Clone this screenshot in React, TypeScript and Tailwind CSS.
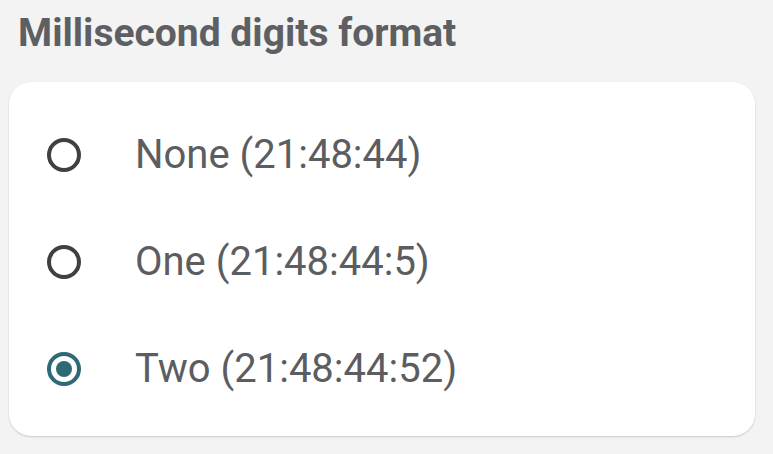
import React from "react";

const options = [
  { label: "None (21:48:44)" },
  { label: "One (21:48:44:5)" },
  { label: "Two (21:48:44:52)" },
];

function Radio({ checked }: { checked: boolean }) {
  return (
    <span
      className={
        checked
          ? "flex h-[34px] w-[34px] shrink-0 items-center justify-center rounded-full border-[4px] border-[#2e6a76]"
          : "flex h-[34px] w-[34px] shrink-0 items-center justify-center rounded-full border-[4px] border-[#3d4144]"
      }
    >
      {checked && <span className="h-[16px] w-[16px] rounded-full bg-[#2e6a76]" />}
    </span>
  );
}

export default function App() {
  const [selected, setSelected] = React.useState(2);

  return (
    <div
      className="h-[454px] w-[773px] bg-[#f3f3f3] pl-[9px] pr-[18px] pt-[10px]"
      style={{ fontFamily: "Roboto, 'Noto Sans', sans-serif" }}
    >
      <h1 className="pl-[9px] text-[39px] font-bold leading-[46px] text-[#5d5f63]">
        Millisecond digits format
      </h1>
      <div className="mt-[26px] flex h-[354px] flex-col rounded-[22px] bg-white pb-[14px] pt-[19px] shadow-[0_1px_2px_rgba(0,0,0,0.18)]">
        {options.map((opt, i) => (
          <button
            key={opt.label}
            onClick={() => setSelected(i)}
            className="flex h-[107px] items-center gap-[54px] pl-[38px] text-left"
          >
            <Radio checked={selected === i} />
            <span className="text-[40px] leading-none text-[#5b5d61]">{opt.label}</span>
          </button>
        ))}
      </div>
    </div>
  );
}
